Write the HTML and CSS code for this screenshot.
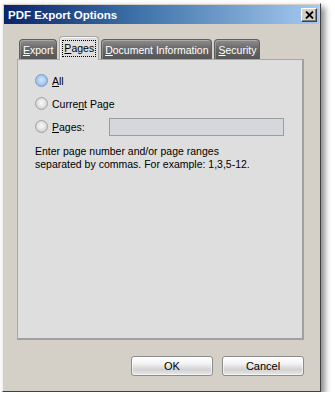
FILE: index.html
```html
<!DOCTYPE html>
<html lang="en">
<head>
  <meta charset="UTF-8" />
  <title>PDF Export Options</title>
  <link rel="stylesheet" href="styles.css">
</head>
<body>

  <!-- Dialog window -->
  <div class="window">
    <div class="titlebar">
      <span class="title">PDF Export Options</span>
      <button class="close-btn" type="button" aria-label="Close">
        <svg width="9" height="8" viewBox="0 0 9 8">
          <path d="M1 0.5 L8 7.5 M8 0.5 L1 7.5" stroke="#000" stroke-width="1.8" fill="none"/>
        </svg>
      </button>
    </div>

    <div class="dialog-body">
      <!-- Tabs -->
      <div class="tabs">
        <div class="tab"><u>E</u>xport</div>
        <div class="tab active"><span class="focus"><u>P</u>ages</span></div>
        <div class="tab"><u>D</u>ocument Information</div>
        <div class="tab"><u>S</u>ecurity</div>
      </div>

      <!-- Pages panel -->
      <div class="panel">
        <div class="option">
          <span class="radio checked"></span>
          <span><u>A</u>ll</span>
        </div>
        <div class="option">
          <span class="radio"></span>
          <span>Curre<u>n</u>t Page</span>
        </div>
        <div class="option">
          <span class="radio"></span>
          <span class="option-label"><u>P</u>ages:</span>
          <input class="range-input" type="text">
        </div>
        <p class="hint">Enter page number and/or page ranges<br>separated by commas. For example: 1,3,5-12.</p>
      </div>

      <div class="buttons">
        <button class="btn" type="button">OK</button>
        <button class="btn" type="button">Cancel</button>
      </div>
    </div>
  </div>

</body>
</html>
```

FILE: styles.css
```css
* {
  margin: 0;
  padding: 0;
  box-sizing: border-box;
}

body {
  font-family: 'Liberation Sans', Arial, sans-serif;
  font-size: 10.5px;
  color: #000;
  background: #fff;
  padding: 3px 0 0 2px;
}

.window {
  width: 319px;
  height: 389px;
  background-color: #d4d0c8;
  border: 1px solid;
  border-color: #f4f2ee #404040 #404040 #f4f2ee;
  padding: 1px;
  box-shadow: 4px 4px 6px rgba(0, 0, 0, 0.45);
}

.titlebar {
  height: 19px;
  display: flex;
  align-items: center;
  justify-content: space-between;
  padding: 0 2px 0 4px;
  background: linear-gradient(to right, #0a246a 0%, #3a6ea5 40%, #a6caf0 100%);
  color: #fff;
}

.title {
  font-weight: bold;
  font-size: 11.5px;
}

.close-btn {
  width: 16px;
  height: 14px;
  display: flex;
  align-items: center;
  justify-content: center;
  background-color: #d4d0c8;
  border: 1px solid;
  border-color: #fff #404040 #404040 #fff;
  box-shadow: inset -1px -1px 0 #808080;
}

.dialog-body {
  padding: 12px 0 0 13px;
}

/* Tabs */
.tabs {
  display: flex;
  align-items: flex-end;
  gap: 2px;
  padding-left: 2px;
  height: 23px;
}

.tab {
  height: 20px;
  padding: 0 3px;
  display: flex;
  align-items: center;
  color: #fff;
  background: linear-gradient(#8e8e8e, #686868 45%, #555);
  border: 1px solid #5e5e5e;
  border-bottom: none;
  border-radius: 4px 4px 0 0;
  box-shadow: inset 1px 1px 0 rgba(255, 255, 255, 0.25);
}

.tab.active {
  height: 24px;
  margin-bottom: -1px;
  padding: 0 2px;
  color: #000;
  background: #dedede;
  border-color: #a8a8a8;
  box-shadow: inset 1px 1px 0 #f4f4f4;
  position: relative;
  z-index: 1;
}

.focus {
  border: 1px dotted #000;
  padding: 0 1px;
  line-height: 15px;
}

/* Panel */
.panel {
  width: 287px;
  height: 281px;
  background: #dedede;
  border: 1px solid #a8a8a8;
  border-right: 2px solid #a0a0a0;
  border-bottom: 2px solid #a0a0a0;
  padding: 14px 0 0 17px;
}

.option {
  display: flex;
  align-items: center;
  gap: 4px;
  height: 13px;
  margin-bottom: 10px;
}

.option-label {
  width: 53px;
}

.radio {
  width: 13px;
  height: 13px;
  border-radius: 50%;
  border: 1px solid #a4a4a4;
  background: radial-gradient(circle at 50% 45%, #fafafa 0%, #e4e4e4 45%, #b8b8b8 100%);
}

.radio.checked {
  border-color: #7a9ccc;
  background: radial-gradient(circle at 50% 45%, #d6e8fc 0%, #a9cbf2 50%, #7fa8dc 100%);
}

.range-input {
  width: 175px;
  height: 18px;
  background: #d4d7dc;
  border: 1px solid #9c9c9c;
  outline: none;
}

.hint {
  margin-top: 12px;
  line-height: 13px;
}

/* Buttons */
.buttons {
  display: flex;
  justify-content: flex-end;
  gap: 9px;
  width: 287px;
  margin-top: 16px;
}

.btn {
  width: 82px;
  height: 20px;
  font-family: inherit;
  font-size: 11px;
  color: #000;
  border: 1px solid #8c8c8c;
  border-radius: 3px;
  background: linear-gradient(#ffffff 0%, #f4f4f4 35%, #d2d2d2 70%, #e8e8e8 100%);
  box-shadow: inset 0 0 0 1px rgba(255, 255, 255, 0.6);
}
```
